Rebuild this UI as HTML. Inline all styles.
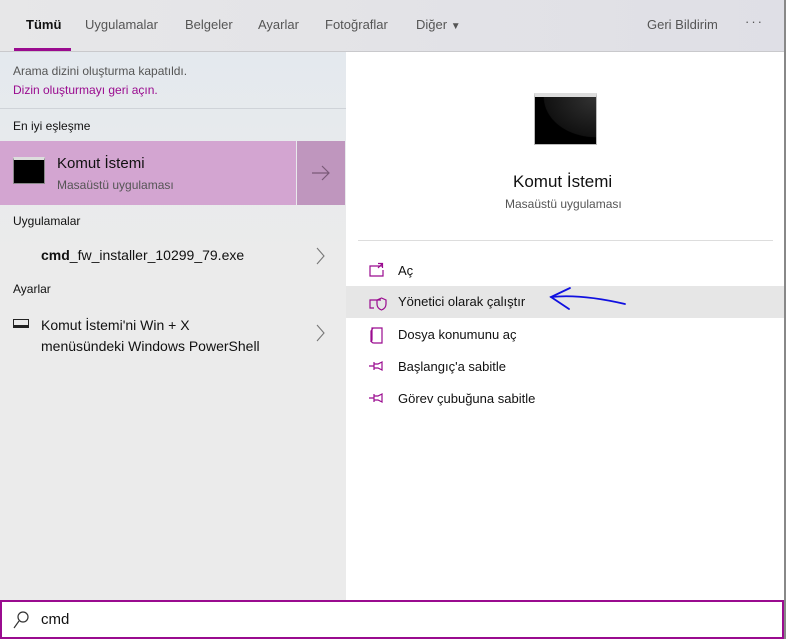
<!DOCTYPE html>
<html><head><meta charset="utf-8"><style>
*{margin:0;padding:0;box-sizing:border-box}
body{width:786px;height:639px;overflow:hidden;font-family:"Liberation Sans",sans-serif;background:#fff;position:relative;color:#000}
.a{position:absolute;white-space:nowrap}
#hdr{left:0;top:0;width:784px;height:52px;background:linear-gradient(90deg,#e7e7e8,#dfdfe6);border-bottom:1px solid #c9c9cc}
.tab{top:17px;font-size:13px;color:#555}
#left{left:0;top:52px;width:346px;height:548px;background:linear-gradient(180deg,#e4e9ee 0,#ebebeb 200px,#ebebeb)}
#right{left:346px;top:52px;width:438px;height:548px;background:#fff}
.ri{font-size:13px;color:#111}
</style></head><body>
<div class="a" id="hdr"></div>
<div class="a tab" style="left:26px;color:#111;font-weight:bold">Tümü</div>
<div class="a" style="left:14px;top:48px;width:57px;height:3px;background:#9a0b8f"></div>
<div class="a tab" style="left:85px">Uygulamalar</div>
<div class="a tab" style="left:185px">Belgeler</div>
<div class="a tab" style="left:258px">Ayarlar</div>
<div class="a tab" style="left:325px">Fotoğraflar</div>
<div class="a tab" style="left:416px">Diğer <span style="font-size:10px">▼</span></div>
<div class="a tab" style="left:647px">Geri Bildirim</div>
<div class="a tab" style="left:745px;top:14px;letter-spacing:2px">···</div>
<div class="a" style="left:784px;top:0;width:2px;height:639px;background:#888"></div>

<div class="a" id="left"></div>
<div class="a" style="left:13px;top:64px;font-size:12px;color:#555">Arama dizini oluşturma kapatıldı.</div>
<div class="a" style="left:13px;top:83px;font-size:12px;color:#9a0b8f">Dizin oluşturmayı geri açın.</div>
<div class="a" style="left:0;top:108px;width:346px;height:1px;background:#cfd3d8"></div>
<div class="a" style="left:13px;top:119px;font-size:12px;color:#111">En iyi eşleşme</div>
<div class="a" style="left:0;top:141px;width:296px;height:64px;background:#d3a5d1"></div>
<div class="a" style="left:297px;top:141px;width:48px;height:64px;background:#bf96be"></div>
<svg class="a" style="left:311px;top:165px" width="20" height="16" fill="none" stroke="#7a5a78" stroke-width="1.2"><path d="M1 8H18M11 1l7 7-7 7"/></svg>
<div class="a" style="left:13px;top:157px;width:32px;height:27px;background:#000;border:1px solid #888;border-top:3px solid #ddd"></div>
<div class="a" style="left:57px;top:155px;font-size:15px;color:#111">Komut İstemi</div>
<div class="a" style="left:57px;top:178px;font-size:12px;color:#555">Masaüstü uygulaması</div>
<div class="a" style="left:13px;top:214px;font-size:12px;color:#111">Uygulamalar</div>
<div class="a" style="left:41px;top:247px;font-size:14px;color:#111"><b>cmd</b>_fw_installer_10299_79.exe</div>
<svg class="a" style="left:316px;top:247px" width="10" height="18" fill="none" stroke="#777" stroke-width="1.1"><path d="M1 1l7 8-7 8"/></svg>
<div class="a" style="left:13px;top:282px;font-size:12px;color:#111">Ayarlar</div>
<div class="a" style="left:13px;top:319px;width:16px;height:9px;border:1px solid #222;border-bottom-width:3px"></div>
<div class="a" style="left:41px;top:315px;font-size:14px;color:#111;line-height:21px">Komut İstemi'ni Win + X<br>menüsündeki Windows PowerShell</div>
<svg class="a" style="left:316px;top:324px" width="10" height="18" fill="none" stroke="#777" stroke-width="1.1"><path d="M1 1l7 8-7 8"/></svg>

<div class="a" id="right"></div>
<div class="a" style="left:534px;top:93px;width:63px;height:52px;background:radial-gradient(ellipse at 100% 0,#333 0,#111 60%,#000 61%);border:1px solid #bbb;border-top:4px solid #ddd"></div>
<div class="a" style="left:513px;top:172px;font-size:17px;color:#111">Komut İstemi</div>
<div class="a" style="left:505px;top:197px;font-size:12px;color:#555">Masaüstü uygulaması</div>
<div class="a" style="left:358px;top:240px;width:415px;height:1px;background:#ddd"></div>
<div class="a" style="left:346px;top:286px;width:438px;height:32px;background:#e6e6e6"></div>
<svg class="a" style="left:368px;top:262px" width="20" height="150" fill="none" stroke="#9a0b8f" stroke-width="1.2">
<path d="M14 4H2V14H15V8M10 1.5h4.5V6M14.5 1.5L10 6"/>
<path d="M13 38H2V46H6M9 38l4.5-2 4.5 2v4c0 3-2 5-4.5 6c-2.5-1-4.5-3-4.5-6z"/>
<path d="M5 66h9v15H6c-2 0-3-1-2-3V66zM5 66l-2 3v11"/>
<path d="M1 104h5M6 100v8M6 102h4l4-2v8l-4-2H6"/>
<path d="M1 136h5M6 132v8M6 134h4l4-2v8l-4-2H6"/>
</svg>
<div class="a ri" style="left:398px;top:263px">Aç</div>
<div class="a ri" style="left:398px;top:294px">Yönetici olarak çalıştır</div>
<div class="a ri" style="left:398px;top:327px">Dosya konumunu aç</div>
<div class="a ri" style="left:398px;top:359px">Başlangıç'a sabitle</div>
<div class="a ri" style="left:398px;top:391px">Görev çubuğuna sabitle</div>
<svg class="a" style="left:545px;top:285px" width="85" height="30" fill="none" stroke="#1010e0" stroke-width="1.8" stroke-linecap="round">
<path d="M6 12C25 10 50 12 80 19"/><path d="M25 3L6 12L24 24"/>
</svg>
<div class="a" style="left:0;top:600px;width:784px;height:39px;border:2px solid #9a0b8f;background:#fff"></div>
<svg class="a" style="left:12px;top:610px" width="18" height="20" fill="none" stroke="#333" stroke-width="1.2"><circle cx="11" cy="7" r="5"/><path d="M7 11L2 18"/></svg>
<div class="a" style="left:41px;top:611px;font-size:15px;color:#111">cmd</div>
</body></html>
